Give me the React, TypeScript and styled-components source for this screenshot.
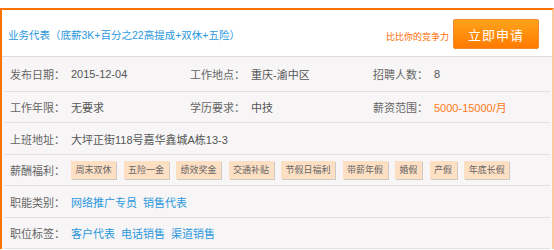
import React from 'react';
import styled, { createGlobalStyle } from 'styled-components';

const GlobalStyle = createGlobalStyle`
  html, body {
    margin: 0;
    padding: 0;
    background: #ffffff;
  }
  body {
    font-family: 'Liberation Sans', 'Noto Sans CJK SC', sans-serif;
    font-size: 11px;
  }
`;

const Page = styled.div`
  width: 554px;
  padding-top: 8px;
`;

const Panel = styled.div`
  width: 550px;
  border-top: 2px solid #ff7300;
  border-left: 2px solid #ff7300;
  border-right: 2px solid #fcc8a0;
  background: #f7f5f5;
`;

const Header = styled.div`
  display: flex;
  align-items: center;
  height: 46px;
  padding: 0 13px 0 6px;
  background: #ffffff;
  border-bottom: 1px solid #dcdcdc;
  white-space: nowrap;
`;

const Title = styled.div`
  flex: 1;
  color: #2b98dd;
  font-size: 10.5px;
  padding-top: 3px;
`;

const Compete = styled.span`
  color: #ff6a00;
  font-size: 9px;
  margin-right: 4px;
  padding-top: 6px;
`;

const ApplyButton = styled.button`
  width: 86px;
  height: 30px;
  border: 1px solid #f08a2a;
  border-radius: 2px;
  background: linear-gradient(#ffa31a, #ff7a00);
  color: #ffffff;
  font-family: 'Noto Sans CJK SC', sans-serif;
  font-size: 13px;
  letter-spacing: 1px;
  cursor: pointer;
  margin-top: 2px;
  padding: 0;
`;

const Body = styled.div`
  padding: 0 2px;
`;

const Row = styled.div<{ h: number }>`
  display: flex;
  align-items: center;
  height: ${(p) => p.h}px;
  border-bottom: 1px solid #e2e0e0;
  white-space: nowrap;
`;

const Cell = styled.div<{ w?: number }>`
  display: flex;
  align-items: center;
  width: ${(p) => (p.w ? `${p.w}px` : 'auto')};
`;

const Label = styled.span`
  width: 67px;
  padding-left: 6px;
  box-sizing: border-box;
  color: #666666;
  flex-shrink: 0;
`;

const Value = styled.span<{ tone?: 'orange' }>`
  color: ${(p) => (p.tone === 'orange' ? '#ff7a1a' : '#555555')};
`;

const Links = styled.div`
  display: flex;
  gap: 6px;
`;

const Link = styled.a`
  color: #2b98dd;
  text-decoration: none;
`;

const Tags = styled.div`
  display: flex;
  gap: 7.5px;
`;

const Tag = styled.span`
  display: inline-block;
  padding: 0 4.5px;
  height: 18px;
  line-height: 18px;
  background: #fddfc3;
  color: #666666;
  font-size: 9px;
  box-shadow: 1px 1px 0 #cfc9c4;
`;

const tags = ['周末双休', '五险一金', '绩效奖金', '交通补贴', '节假日福利', '带薪年假', '婚假', '产假', '年底长假'];

export default function App() {
  return (
    <Page>
      <GlobalStyle />
      <Panel>
        <Header>
          <Title>业务代表（底薪3K+百分之22高提成+双休+五险）</Title>
          <Compete>比比你的竞争力</Compete>
          <ApplyButton>立即申请</ApplyButton>
        </Header>
        <Body>
          <Row h={34}>
            <Cell w={180}>
              <Label>发布日期：</Label>
              <Value>2015-12-04</Value>
            </Cell>
            <Cell w={183}>
              <Label>工作地点：</Label>
              <Value>重庆-渝中区</Value>
            </Cell>
            <Cell>
              <Label>招聘人数：</Label>
              <Value>8</Value>
            </Cell>
          </Row>
          <Row h={30}>
            <Cell w={180}>
              <Label>工作年限：</Label>
              <Value>无要求</Value>
            </Cell>
            <Cell w={183}>
              <Label>学历要求：</Label>
              <Value>中技</Value>
            </Cell>
            <Cell>
              <Label>薪资范围：</Label>
              <Value tone="orange">5000-15000/月</Value>
            </Cell>
          </Row>
          <Row h={31}>
            <Cell>
              <Label>上班地址：</Label>
              <Value>大坪正街118号嘉华鑫城A栋13-3</Value>
            </Cell>
          </Row>
          <Row h={30}>
            <Cell>
              <Label>薪酬福利：</Label>
              <Tags>
                {tags.map((t) => (
                  <Tag key={t}>{t}</Tag>
                ))}
              </Tags>
            </Cell>
          </Row>
          <Row h={31}>
            <Cell>
              <Label>职能类别：</Label>
              <Links>
                <Link>网络推广专员</Link>
                <Link>销售代表</Link>
              </Links>
            </Cell>
          </Row>
          <Row h={30}>
            <Cell>
              <Label>职位标签：</Label>
              <Links>
                <Link>客户代表</Link>
                <Link>电话销售</Link>
                <Link>渠道销售</Link>
              </Links>
            </Cell>
          </Row>
        </Body>
      </Panel>
    </Page>
  );
}
